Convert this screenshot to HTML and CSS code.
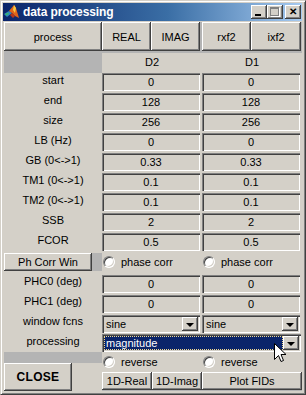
FILE: index.html
```html
<!DOCTYPE html>
<html>
<head>
<meta charset="utf-8">
<link rel="stylesheet" href="styles.css">
</head>
<body>
<div class="window">
  <div class="titlebar">
    <svg class="appicon" width="16" height="16" viewBox="0 0 16 16">
      <polygon points="0,10 5,7 8,9 3,13" fill="#2f86c0"/>
      <polygon points="1,10 4,8.5 5,10 2,11.5" fill="#39b36a"/>
      <polygon points="5,7 10,1 12,4 15,14 11,12 8,9" fill="#e0641a"/>
      <polygon points="10,1 12,4 11,9 9,6" fill="#f7c843"/>
      <polygon points="8,9 11,12 9,14 6,11" fill="#b8371a"/>
    </svg>
    <span class="title">data processing</span>
    <div class="tbtns">
      <span class="tbtn"><i class="g-min"></i></span>
      <span class="tbtn"><i class="g-max"></i></span>
      <span class="tbtn tclose">✕</span>
    </div>
  </div>
  <div class="client">
    <div class="toolbar">
      <div class="btn w98">process</div>
      <div class="btn w49">REAL</div>
      <div class="btn w49">IMAG</div>
      <div class="tgap"></div>
      <div class="btn w49">rxf2</div>
      <div class="btn w50">ixf2</div>
    </div>
    <div class="grid">
      <div class="blank"></div>
      <div class="cell hdr">D2</div>
      <div class="cell hdr">D1</div>

      <div class="label">start</div>
      <div class="cell"><div class="field">0</div></div>
      <div class="cell"><div class="field">0</div></div>

      <div class="label">end</div>
      <div class="cell"><div class="field">128</div></div>
      <div class="cell"><div class="field">128</div></div>

      <div class="label">size</div>
      <div class="cell"><div class="field">256</div></div>
      <div class="cell"><div class="field">256</div></div>

      <div class="label">LB (Hz)</div>
      <div class="cell"><div class="field">0</div></div>
      <div class="cell"><div class="field">0</div></div>

      <div class="label">GB (0&lt;-&gt;1)</div>
      <div class="cell"><div class="field">0.33</div></div>
      <div class="cell"><div class="field">0.33</div></div>

      <div class="label">TM1 (0&lt;-&gt;1)</div>
      <div class="cell"><div class="field">0.1</div></div>
      <div class="cell"><div class="field">0.1</div></div>

      <div class="label">TM2 (0&lt;-&gt;1)</div>
      <div class="cell"><div class="field">0.1</div></div>
      <div class="cell"><div class="field">0.1</div></div>

      <div class="label">SSB</div>
      <div class="cell"><div class="field">2</div></div>
      <div class="cell"><div class="field">2</div></div>

      <div class="label">FCOR</div>
      <div class="cell"><div class="field">0.5</div></div>
      <div class="cell"><div class="field">0.5</div></div>

      <div class="phcell"><div class="phtop"><div class="btn phbtn">Ph Corr Win</div></div></div>
      <div class="cell radiocell top"><span class="radio"></span><span>phase corr</span></div>
      <div class="cell radiocell top"><span class="radio"></span><span>phase corr</span></div>

      <div class="label">PHC0 (deg)</div>
      <div class="cell pad1"><div class="field">0</div></div>
      <div class="cell pad1"><div class="field">0</div></div>

      <div class="label">PHC1 (deg)</div>
      <div class="cell pad1"><div class="field">0</div></div>
      <div class="cell pad1"><div class="field">0</div></div>

      <div class="label">window fcns</div>
      <div class="cell pad1"><div class="select"><span class="val">sine</span><span class="arrow"><i></i></span></div></div>
      <div class="cell pad1"><div class="select"><span class="val">sine</span><span class="arrow"><i></i></span></div></div>

      <div class="label">processing</div>
      <div class="cell span2"><div class="select wide"><span class="val sel">magnitude</span><span class="arrow"><i></i></span></div></div>
    </div>
    <div class="footer">
      <div class="fleft">
        <div class="fspacer"></div>
        <div class="frow">
          <div class="btn closebtn">CLOSE</div>
          <div class="ffill"></div>
        </div>
      </div>
      <div class="fright">
        <div class="revrow">
          <div class="radiocell half"><span class="radio"></span><span>reverse</span></div>
          <div class="radiocell half"><span class="radio"></span><span>reverse</span></div>
        </div>
        <div class="brow">
          <div class="btn w50">1D-Real</div>
          <div class="btn w50">1D-Imag</div>
          <div class="btn w100">Plot FIDs</div>
        </div>
      </div>
    </div>
  </div>
  <svg class="cursor" width="13" height="21" viewBox="0 0 13 21">
    <path d="M0.5,0.5 L0.5,16.5 L4.5,12.5 L7,18.5 L9.5,17.5 L7,11.5 L12,11.5 Z" fill="#fff" stroke="#000" stroke-width="1"/>
  </svg>
</div>
</body>
</html>
```

FILE: styles.css
```css
* { box-sizing: border-box; margin: 0; padding: 0; }
html, body { width: 306px; height: 395px; overflow: hidden; background: #d4d0c8; }
body { font-family: "Liberation Sans", Arial, sans-serif; font-size: 11px; color: #000; }

.window {
  position: relative;
  width: 306px; height: 395px;
  border: 1px solid; border-color: #d4d0c8 #404040 #404040 #d4d0c8;
  box-shadow: inset 1px 1px #fff, inset -1px -1px #808080;
  padding: 2px;
  background: #d4d0c8;
  display: flex; flex-direction: column;
}

.titlebar {
  height: 18px; width: 299px;
  background: linear-gradient(90deg, #0a246a 0%, #3a6ea5 55%, #a6caf0 100%);
  display: flex; align-items: center;
}
.appicon { margin-left: 1px; flex: none; }
.title {
  margin-left: 3px; color: #fff; font-weight: bold; font-size: 12px;
  letter-spacing: -0.1px; white-space: nowrap;
}
.tbtns { margin-left: auto; margin-right: 1px; display: flex; gap: 0; }
.tbtn {
  width: 16px; height: 14px; background: #d4d0c8; position: relative;
  box-shadow: inset -1px -1px #404040, inset 1px 1px #fff, inset -2px -2px #808080;
  display: flex; align-items: center; justify-content: center;
}
.tbtn.tclose { margin-left: 2px; font-size: 10px; font-weight: bold; line-height: 14px; }
.g-min { position: absolute; left: 4px; top: 9px; width: 6px; height: 2px; background: #000; }
.g-max {
  position: absolute; left: 3px; top: 2px; width: 9px; height: 9px;
  border: 1px solid #808080; border-top-width: 2px;
  box-shadow: 1px 1px #fff;
}

.client {
  margin: 1px 0 0 1px; width: 298px; height: 369px;
  background: #b4b4b4;
  display: flex; flex-direction: column;
}

.btn {
  background: #d4d0c8;
  box-shadow: inset -1px -1px #404040, inset 1px 1px #fff, inset -2px -2px #808080;
  display: flex; align-items: center; justify-content: center;
  white-space: nowrap;
}
.w98 { width: 98px; }
.w49 { width: 49px; }
.w50 { width: 50px; }
.w100 { width: 100px; }

.toolbar { display: flex; height: 29px; margin-bottom: 2px; }
.tgap { width: 2px; }

.grid {
  display: grid;
  grid-template-columns: 98px 100px 100px;
  grid-template-rows: repeat(10, 20px) 21px 20px 20px 20px 18px;
}
.blank { background: #b4b4b4; }
.label { background: #d4d0c8; text-align: center; line-height: 14px; white-space: nowrap; }
.cell { background: #d4d0c8; }
.pad1 { padding-top: 1px; }
.hdr { text-align: center; line-height: 14px; padding-top: 2px; }

.field {
  width: 98px; height: 18px; background: #d4d0c8;
  box-shadow: inset 1px 1px #808080, inset 2px 2px #404040, inset -1px -1px #fff, inset -2px -2px #d4d0c8;
  text-align: center; line-height: 18px;
}

.phcell { background: #d4d0c8; }
.phtop { height: 18px; background: #b4b4b4; display: flex; }
.phbtn { width: 88px; height: 18px; }

.radiocell { display: flex; align-items: center; padding-left: 1px; gap: 6px; white-space: nowrap; }
.radiocell.top { align-items: flex-start; padding-top: 3px; line-height: 12px; }
.radio {
  width: 12px; height: 12px; border-radius: 50%; background: #fff; flex: none;
  border: 1px solid; border-color: #808080 #fff #fff #808080;
  box-shadow: inset 1px 1px #404040, inset -1px -1px #d4d0c8;
}

.select {
  width: 98px; height: 18px; background: #d4d0c8; padding: 2px;
  box-shadow: inset 1px 1px #808080, inset 2px 2px #404040, inset -1px -1px #fff, inset -2px -2px #d4d0c8;
  display: flex;
}
.select.wide { width: 199px; }
.span2 { grid-column: 2 / 4; }
.val { flex: 1; padding-left: 2px; line-height: 14px; white-space: nowrap; }
.val.sel { background: #0a246a; color: #fff; outline: 1px dotted #f0d890; outline-offset: -1px; }
.arrow {
  width: 16px; height: 14px; background: #d4d0c8; flex: none;
  box-shadow: inset -1px -1px #404040, inset 1px 1px #fff, inset -2px -2px #808080;
  display: flex; align-items: center; justify-content: center;
}
.arrow i {
  width: 0; height: 0; margin-top: 1px;
  border-left: 4px solid transparent; border-right: 4px solid transparent; border-top: 4px solid #000;
}

.footer { display: flex; height: 39px; }
.fleft { width: 98px; display: flex; flex-direction: column; }
.fspacer { height: 11px; }
.frow { display: flex; height: 28px; }
.closebtn { width: 68px; height: 28px; font-weight: bold; font-size: 12px; letter-spacing: 0.3px; }
.ffill { flex: 1; background: #d4d0c8; }
.fright { width: 200px; display: flex; flex-direction: column; }
.revrow { height: 20px; display: flex; background: #d4d0c8; }
.half { width: 100px; }
.brow { display: flex; height: 18px; }

.cursor { position: absolute; left: 273px; top: 342px; }
```
